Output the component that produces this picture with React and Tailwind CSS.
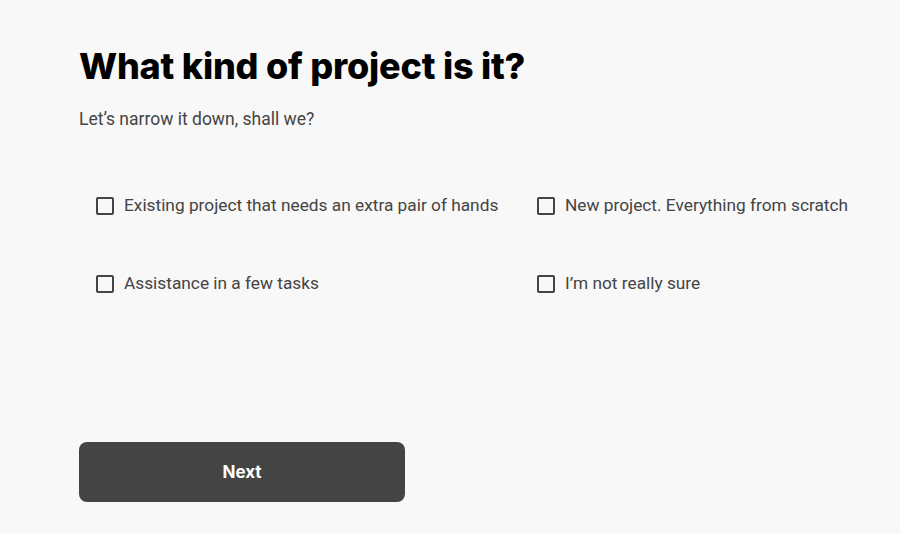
import React, { useState } from 'react';

const options = [
  'Existing project that needs an extra pair of hands',
  'New project. Everything from scratch',
  'Assistance in a few tasks',
  'I’m not really sure',
];

const Option = ({ label, checked, onToggle }) => (
  <label className="flex items-center gap-[10px] cursor-pointer select-none">
    <span
      className={`w-[18px] h-[18px] rounded-[2px] border-2 border-[#444] flex items-center justify-center ${
        checked ? 'bg-[#444]' : 'bg-transparent'
      }`}
    >
      {checked && (
        <svg viewBox="0 0 16 16" className="w-3 h-3" fill="none" stroke="#fff" strokeWidth="2.5">
          <path d="M3 8.5l3 3 7-7" />
        </svg>
      )}
    </span>
    <input type="checkbox" className="hidden" checked={checked} onChange={onToggle} />
    <span className="text-[17.3px] text-[#444]">{label}</span>
  </label>
);

export default function App() {
  const [selected, setSelected] = useState([]);

  const toggle = (label) =>
    setSelected((s) => (s.includes(label) ? s.filter((x) => x !== label) : [...s, label]));

  return (
    <div className="min-h-[534px] bg-[#f8f8f8] pl-[79px] pt-[42px] font-['Roboto',sans-serif]">
      <h1 className="font-['Inter',sans-serif] font-extrabold text-[36px] leading-[48px] tracking-[-0.2px] text-black">
        What kind of project is it?
      </h1>
      <p className="mt-[16px] text-[17.5px] text-[#444]">Let’s narrow it down, shall we?</p>

      {/* Options */}
      <div className="mt-[61px] pl-[17px] grid grid-cols-[441px_auto] gap-y-[52px]">
        {options.map((o) => (
          <Option key={o} label={o} checked={selected.includes(o)} onToggle={() => toggle(o)} />
        ))}
      </div>

      <button className="mt-[145px] w-[326px] h-[60px] rounded-[8px] bg-[#444] text-white font-['Inter',sans-serif] font-bold text-[17px] pt-[2px]">
        Next
      </button>
    </div>
  );
}
